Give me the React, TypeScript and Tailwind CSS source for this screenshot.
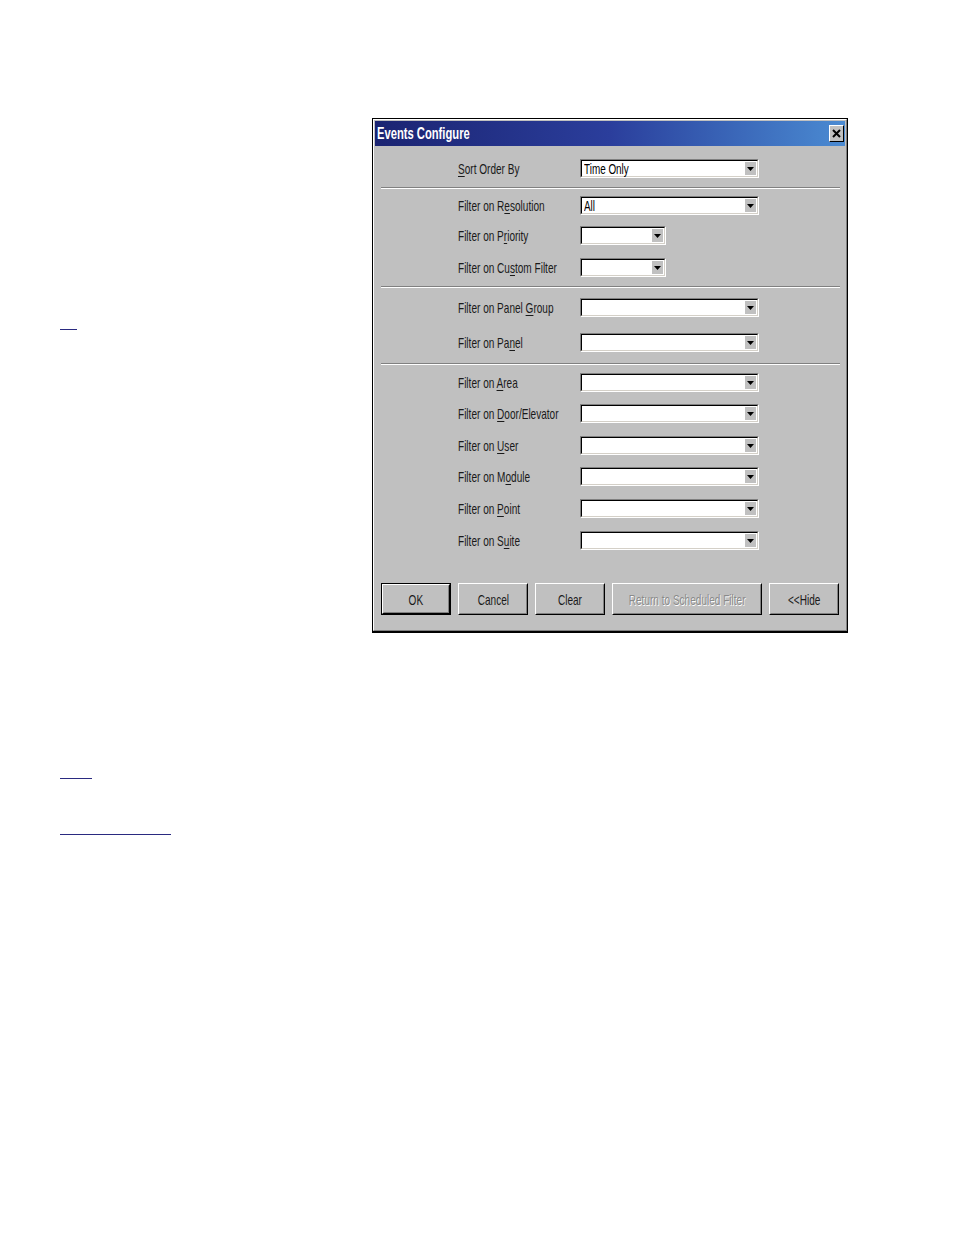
import React from "react";

const FONT = "font-['Liberation_Sans_Narrow','Liberation_Sans',Arial,sans-serif]";

type RowDef = { a: string; u: string; b: string; wide: boolean; value?: string; mt: string };

function Label({ a, u, b }: { a: string; u: string; b: string }) {
  return (
    <span className="inline-block origin-left scale-x-[0.67] whitespace-nowrap text-[15px] leading-none text-[#1a1a1a]">
      {a}
      <span className="underline underline-offset-2">{u}</span>
      {b}
    </span>
  );
}

function Combo({ wide, value }: { wide: boolean; value?: string }) {
  return (
    <div
      className={`${wide ? "w-[179px]" : "w-[86px]"} h-[19px] border border-t-[#808080] border-l-[#808080] border-r-white border-b-white`}
    >
      <div className="flex h-full w-full items-center border border-t-black border-l-black border-r-[#d4d0c8] border-b-[#d4d0c8] bg-white">
        <span className="flex-1 overflow-hidden pl-[2px]">
          {value ? (
            <span className="inline-block origin-left scale-x-[0.66] whitespace-nowrap text-[15px] leading-none text-black">
              {value}
            </span>
          ) : null}
        </span>
        <div className="mr-[1px] flex h-[13px] w-[11px] items-center justify-center bg-[#c0c0c0]">
          <svg width="7" height="4" viewBox="0 0 7 4">
            <polygon points="0,0 7,0 3.5,4" fill="#000" />
          </svg>
        </div>
      </div>
    </div>
  );
}

function Row({ r }: { r: RowDef }) {
  return (
    <div className={`flex h-[19px] items-center ${r.mt}`}>
      <div className="flex h-[19px] w-[205px] items-center pl-[83px]">
        <Label a={r.a} u={r.u} b={r.b} />
      </div>
      <Combo wide={r.wide} value={r.value} />
    </div>
  );
}

function Sep({ mt }: { mt: string }) {
  return <div className={`${mt} ml-[6px] mr-[5px] h-[2px] border-t border-t-[#808080] border-b border-b-white`} />;
}

function Btn({
  w,
  label,
  def,
  disabled,
}: {
  w: string;
  label: string;
  def?: boolean;
  disabled?: boolean;
}) {
  return (
    <div className={`${w} h-[32px] ${def ? "border border-black" : ""}`}>
      <div className="h-full w-full border border-t-white border-l-white border-r-black border-b-black">
        <div className="flex h-full w-full items-center justify-center border border-t-[#c0c0c0] border-l-[#c0c0c0] border-r-[#808080] border-b-[#808080] bg-[#c0c0c0]">
          <span
            className={`inline-block scale-x-[0.67] whitespace-nowrap text-[15px] leading-none ${
              disabled ? "text-[#8a8a8a] [text-shadow:1px_1px_0_#ffffff]" : "text-[#1a1a1a]"
            }`}
          >
            {label}
          </span>
        </div>
      </div>
    </div>
  );
}

const group1: RowDef[] = [
  { a: "Filter on R", u: "e", b: "solution", wide: true, value: "All", mt: "mt-[7px]" },
  { a: "Filter on P", u: "r", b: "iority", wide: false, mt: "mt-[11px]" },
  { a: "Filter on Cu", u: "s", b: "tom Filter", wide: false, mt: "mt-[13px]" },
];
const group2: RowDef[] = [
  { a: "Filter on Panel ", u: "G", b: "roup", wide: true, mt: "mt-[10px]" },
  { a: "Filter on Pa", u: "n", b: "el", wide: true, mt: "mt-[16px]" },
];
const group3: RowDef[] = [
  { a: "Filter on ", u: "A", b: "rea", wide: true, mt: "mt-[8px]" },
  { a: "Filter on ", u: "D", b: "oor/Elevator", wide: true, mt: "mt-[12px]" },
  { a: "Filter on ", u: "U", b: "ser", wide: true, mt: "mt-[13px]" },
  { a: "Filter on M", u: "o", b: "dule", wide: true, mt: "mt-[12px]" },
  { a: "Filter on ", u: "P", b: "oint", wide: true, mt: "mt-[13px]" },
  { a: "Filter on S", u: "u", b: "ite", wide: true, mt: "mt-[13px]" },
];

function Dialog() {
  return (
    <div className="w-[476px] border border-black border-b-2 bg-[#c0c0c0] leading-none">
      <div className="border border-t-white border-l-white border-r-[#808080] border-b-[#808080] p-[1px]">
        {/* Title bar */}
        <div className="flex h-[25px] items-center justify-between bg-linear-to-r from-[#1b2472] via-[#2b3e9c] to-[#4b8bd2] pl-[2px] pr-[1px]">
          <span className="inline-block origin-left scale-x-[0.7] whitespace-nowrap text-[16px] font-bold leading-none text-white">
            Events Configure
          </span>
          <div className="flex h-[17px] w-[15px] items-center justify-center border border-t-white border-l-white border-r-black border-b-black bg-[#c0c0c0]">
            <svg width="9" height="9" viewBox="0 0 9 9">
              <path d="M1 1 L8 8 M8 1 L1 8" stroke="#000" strokeWidth="2" />
            </svg>
          </div>
        </div>

        {/* Body */}
        <Row r={{ a: "", u: "S", b: "ort Order By", wide: true, value: "Time Only", mt: "mt-[13px]" }} />
        <Sep mt="mt-[9px]" />
        {group1.map((r, i) => (
          <Row key={i} r={r} />
        ))}
        <Sep mt="mt-[9px]" />
        {group2.map((r, i) => (
          <Row key={i} r={r} />
        ))}
        <Sep mt="mt-[11px]" />
        {group3.map((r, i) => (
          <Row key={i} r={r} />
        ))}

        <div className="mt-[33px] flex gap-[7px] pb-[14px] pl-[6px]">
          <Btn w="w-[70px]" label="OK" def />
          <Btn w="w-[70px]" label="Cancel" />
          <Btn w="w-[70px]" label="Clear" />
          <Btn w="w-[150px]" label="Return to Scheduled Filter" disabled />
          <Btn w="w-[70px]" label="<<Hide" />
        </div>
      </div>
    </div>
  );
}

export default function App() {
  return (
    <div className={`${FONT} relative min-h-[1235px] w-[954px] bg-white pt-[118px]`}>
      <div className="flex">
        <div className="w-[372px] pl-[60px]">
          <a href="#" className="mt-[211px] block h-px w-[17px] bg-[#2a2a80]" aria-label="link" />
        </div>
        <Dialog />
      </div>
      <div className="pl-[60px]">
        <a href="#" className="mt-[145px] block h-px w-[32px] bg-[#2a2a80]" aria-label="link" />
        <a href="#" className="mt-[55px] block h-px w-[111px] bg-[#2a2a80]" aria-label="link" />
      </div>
    </div>
  );
}
